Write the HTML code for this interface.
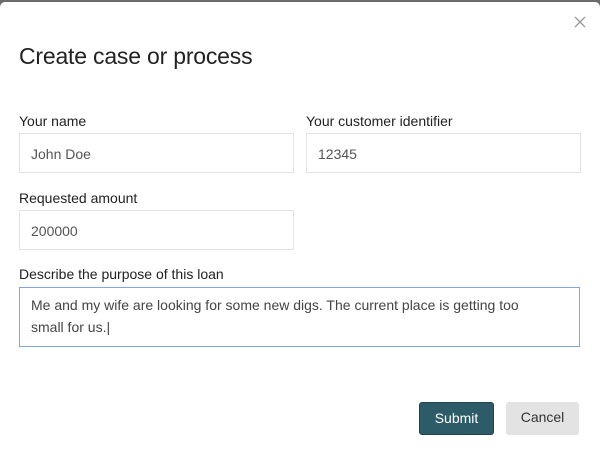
<!DOCTYPE html>
<html><head><style>
*{box-sizing:border-box;margin:0;padding:0}
html,body{width:600px;height:465px;background:#6b6b6b;overflow:hidden;font-family:"Liberation Sans",sans-serif}
.m{position:absolute;left:0;top:2px;width:600px;height:463px;background:#fff;border-radius:5px 5px 0 0}
.t{position:absolute;left:19px;top:41px;font-size:23px;color:#222;letter-spacing:-0.2px}
.x{position:absolute;left:574px;top:14px}
.l{position:absolute;font-size:14px;color:#222}
.i{position:absolute;border:1px solid #e3e3e3;height:40px;font-size:14px;color:#555;padding:12px 0 0 11px}
.ta{position:absolute;left:19px;top:285px;width:561px;height:60px;border:1px solid #7fa4e8;font-size:14px;color:#444;padding:6px 40px 6px 11px;line-height:22px}
.b{position:absolute;top:400px;height:33px;border-radius:3px;font-size:14px;text-align:center;line-height:31px}
</style></head><body>
<div class="m">
<svg class="x" width="12" height="12" viewBox="0 0 12 12"><path d="M1 1L11 11M11 1L1 11" stroke="#999" stroke-width="1.3"/></svg>
<div class="t">Create case or process</div>
<div class="l" style="left:19px;top:111px">Your name</div>
<div class="l" style="left:306px;top:111px">Your customer identifier</div>
<div class="i" style="left:19px;top:131px;width:275px">John Doe</div>
<div class="i" style="left:306px;top:131px;width:275px">12345</div>
<div class="l" style="left:19px;top:188px">Requested amount</div>
<div class="i" style="left:19px;top:208px;width:275px">200000</div>
<div class="l" style="left:19px;top:264px">Describe the purpose of this loan</div>
<div class="ta">Me and my wife are looking for some new digs. The current place is getting too small for us.|</div>
<div class="b" style="left:419px;width:75px;background:#2d5b68;color:#fff;border:1px solid #1f4450">Submit</div>
<div class="b" style="left:506px;width:73px;background:#e3e3e3;color:#333">Cancel</div>
</div>
</body></html>
